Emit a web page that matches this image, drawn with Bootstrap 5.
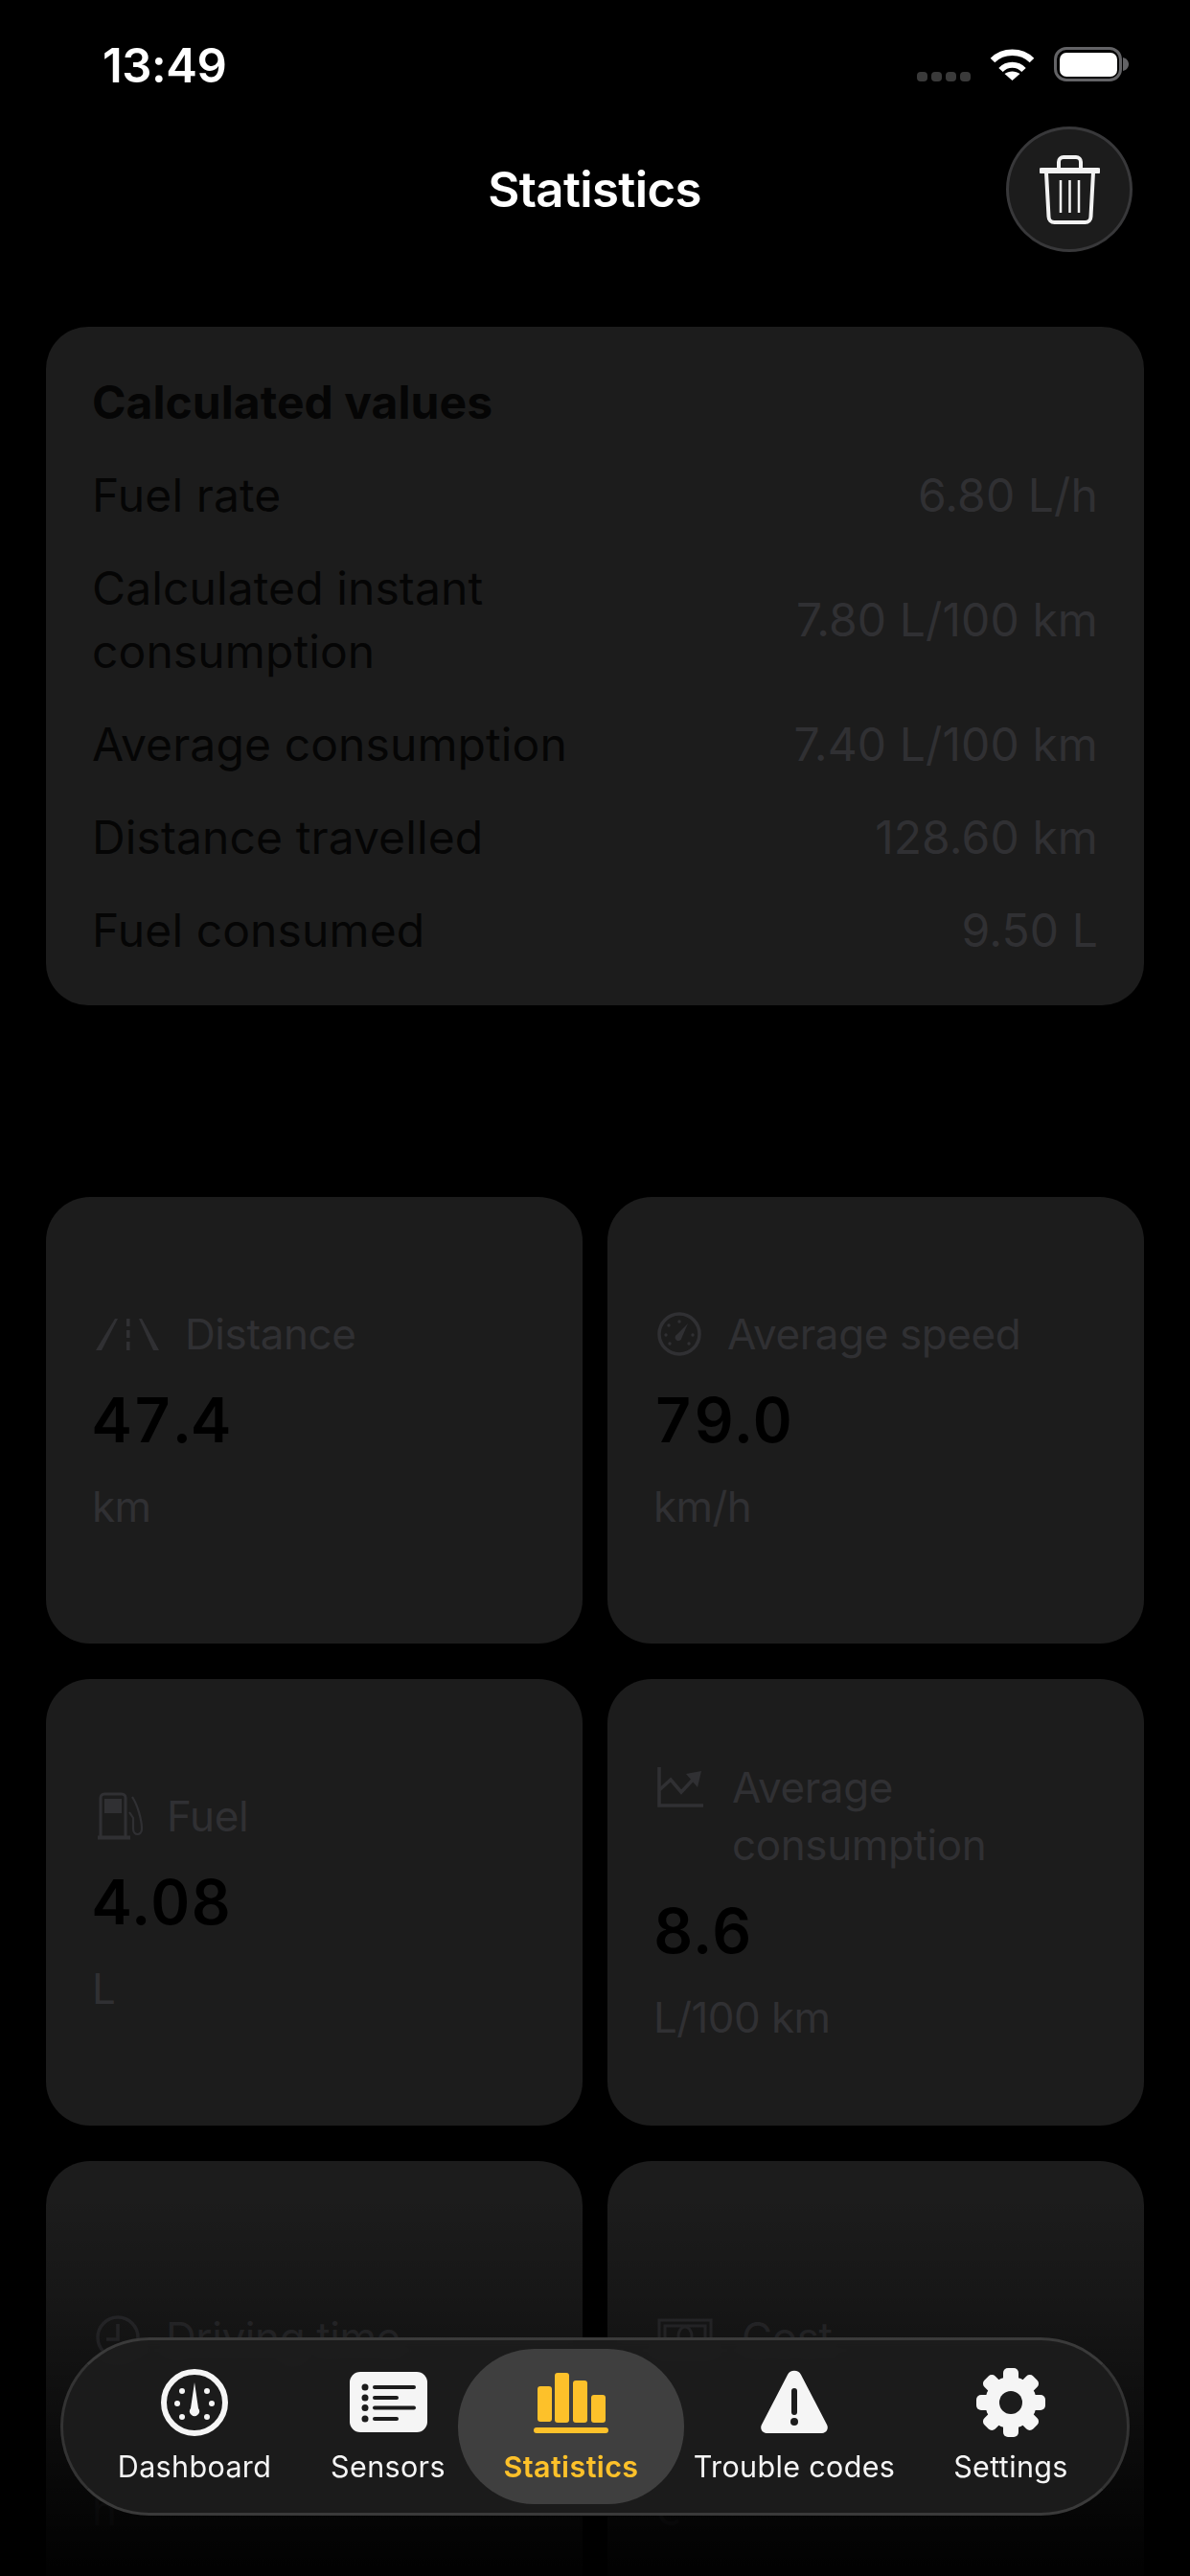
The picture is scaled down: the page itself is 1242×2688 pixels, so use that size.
<!DOCTYPE html>
<html lang="en">
<head>
<meta charset="utf-8">
<title>Statistics</title>
<link href="https://cdn.jsdelivr.net/npm/bootstrap@5.3.0/dist/css/bootstrap.min.css" rel="stylesheet">
<style>
html,body{background:#000;margin:0}
body{width:1242px;height:2688px;overflow:hidden;font-family:Inter,"Liberation Sans",sans-serif;position:relative;color:#fff}
.status-row{height:132px;padding:0 64px 0 107px}
.clock-text{font-size:49px;font-weight:600;line-height:1;margin-top:44px;letter-spacing:-.4px}
.status-icons{margin-top:49px;height:36px}
.sig-dots{gap:4px;align-self:flex-end;margin-right:20px}
.sig-dots i{display:block;width:11px;height:10px;border-radius:4px;background:#3a3a3a}
.wifi-mark{margin-right:20px}
.batt{width:71px;height:36px;border:3.500px solid #636366;border-radius:13px;padding:2.500px}
.batt i{display:block;height:100%;background:#fff;border-radius:7px}
.batt-nub{margin-left:1px}
.title-row{height:131px;grid-template-columns:131px 1fr 132px;padding:0 60px}
.page-title{font-size:51px;font-weight:600;line-height:1;letter-spacing:-.65px}
.round-btn{width:132px;height:131px;border-radius:50%;background:#1c1c1c;border:3px solid #38383a}
.calc-card{margin:78px 48px 200px 48px;padding:46px 48px 45px 48px;background:#1c1c1c;border-radius:44px;gap:31px;height:708px}
.calc-line{font-size:48px;line-height:66px;letter-spacing:.1px}
.calc-head{font-size:48px;line-height:66px;font-weight:700;color:#050505;letter-spacing:.05px}
.calc-name{color:#050505;width:62%}
.calc-val{color:#303033;white-space:nowrap}
.stat-grid{margin:0 48px;grid-template-columns:560px 560px;grid-template-rows:466px 466px 548px;column-gap:26px;row-gap:37px}
.stat-box{background:#1c1c1c;border-radius:46px;padding:0 30px 0 48px}
.stat-head{font-size:44px;line-height:60px;color:#303033;letter-spacing:-.4px}
.hg-a{gap:24px}.hg-b{gap:27px}.hg-c{gap:30px}
.stat-icon{height:60px;flex:none}
.stat-num{font-size:64px;font-weight:600;line-height:80px;color:#000;margin:20px 0;letter-spacing:1.2px;font-variant-numeric:tabular-nums}
.stat-unit{font-size:44px;line-height:60px;color:#303033;letter-spacing:-.6px}
.fade-veil{position:absolute;left:0;right:0;top:2290px;height:398px;background:linear-gradient(to bottom,rgba(0,0,0,0) 0,rgba(0,0,0,.2) 110px,rgba(0,0,0,.85) 350px,rgba(0,0,0,.95) 398px)}
.tabbar{position:absolute;left:63px;top:2439px;width:1116px;height:186px;border-radius:93px;background:rgba(28,28,28,.95);backdrop-filter:blur(6px);border:3px solid #3a3a3a;border-left-color:#333;border-right-color:#333;padding:9px 0}
.tab-item{height:162px;color:#f5f5f5;font-size:30.5px;line-height:40px;letter-spacing:.35px;padding-top:20px;white-space:nowrap;flex:none;gap:11px}
.tab-item svg{display:block;height:72px}
.tw1{width:274px}.tw2{width:130px;margin-right:8px}.tw3{width:236px}.tw4{width:230px}.tw5{width:222px}
.tab-on{background:#3f3f3f;border-radius:80px;color:#fdc12a;font-weight:600;letter-spacing:.4px}
</style>
</head>
<body>
<div class="status-row d-flex justify-content-between">
  <div class="clock-text">13:49</div>
  <div class="status-icons d-flex align-items-center">
    <div class="sig-dots d-flex"><i></i><i></i><i></i><i></i></div>
    <svg class="wifi-mark" width="47" height="36" viewBox="0 0 47 36"><path d="M3 14C14 3 33 3 44 14" fill="none" stroke="#fff" stroke-width="6.500"/><path d="M11.500 24C18 17 29 17 35.500 24" fill="none" stroke="#fff" stroke-width="6"/><path d="M23.500 35L15.500 28C20 24.500 27 24.500 31.500 28Z" fill="#fff"/></svg>
    <div class="batt"><i></i></div>
    <svg class="batt-nub" width="6" height="14" viewBox="0 0 6 14"><path d="M0 0C4 1 6 4 6 7S4 13 0 14Z" fill="#636366"/></svg>
  </div>
</div>
<div class="title-row d-grid align-items-center">
  <div></div>
  <div class="page-title text-center">Statistics</div>
  <div class="round-btn d-flex align-items-center justify-content-center">
    <svg width="63" height="72" viewBox="0 0 63 72" fill="none" stroke="#f2f2f2"><path d="M20 14V7a5 5 0 0 1 5-5h13a5 5 0 0 1 5 5v7" stroke-width="4"/><path d="M2 16H61" stroke-width="6" stroke-linecap="round"/><path d="M7 18l2.500 46a6 6 0 0 0 6 6H47.500a6 6 0 0 0 6-6L56 18" stroke-width="4"/><path d="M22 26V60M31.500 26V60M41 26V60" stroke-width="2.500"/></svg>
  </div>
</div>
<div class="calc-card d-flex flex-column">
  <div class="calc-head">Calculated values</div>
  <div class="calc-line d-flex justify-content-between align-items-center"><span class="calc-name">Fuel rate</span><span class="calc-val">6.80 L/h</span></div>
  <div class="calc-line d-flex justify-content-between align-items-center"><span class="calc-name">Calculated instant consumption</span><span class="calc-val">7.80 L/100 km</span></div>
  <div class="calc-line d-flex justify-content-between align-items-center"><span class="calc-name">Average consumption</span><span class="calc-val">7.40 L/100 km</span></div>
  <div class="calc-line d-flex justify-content-between align-items-center"><span class="calc-name">Distance travelled</span><span class="calc-val">128.60 km</span></div>
  <div class="calc-line d-flex justify-content-between align-items-center"><span class="calc-name">Fuel consumed</span><span class="calc-val">9.50 L</span></div>
</div>
<div class="stat-grid d-grid">
  <div class="stat-box d-flex flex-column justify-content-center">
    <div class="stat-head d-flex hg-b">
      <div class="stat-icon ms-1 d-flex align-items-center"><svg width="66" height="33" viewBox="0 0 66 33" fill="#303033"><path d="M20 0h3L6 33H0Z"/><path d="M45 0h3l18 33H60Z"/><rect x="32" y="0" width="3.500" height="8"/><rect x="32" y="12" width="3.500" height="8"/><rect x="32" y="24" width="3.500" height="9"/></svg></div>
      <div>Distance</div>
    </div>
    <div class="stat-num">47.4</div>
    <div class="stat-unit">km</div>
  </div>
  <div class="stat-box d-flex flex-column justify-content-center">
    <div class="stat-head d-flex hg-b">
      <div class="stat-icon ms-1 d-flex align-items-center"><svg width="46" height="46" viewBox="0 0 46 46" fill="#303033"><circle cx="23" cy="23" r="21" fill="none" stroke="#303033" stroke-width="3.500"/><path d="M32 12L25.500 27a3.500 3.500 0 1 1-5-3.500Z"/><circle cx="23" cy="10" r="1.700"/><circle cx="12" cy="14" r="1.700"/><circle cx="9" cy="24" r="1.700"/><circle cx="13" cy="33" r="1.700"/><circle cx="33" cy="33" r="1.700"/><circle cx="37" cy="24" r="1.700"/></svg></div>
      <div>Average speed</div>
    </div>
    <div class="stat-num">79.0</div>
    <div class="stat-unit">km/h</div>
  </div>
  <div class="stat-box d-flex flex-column justify-content-center">
    <div class="stat-head d-flex hg-a">
      <div class="stat-icon ms-1 d-flex align-items-center"><svg width="50" height="50" viewBox="0 0 50 50" fill="none" stroke="#303033" stroke-width="3"><path d="M5 47V6a4 4 0 0 1 4-4h18a4 4 0 0 1 4 4V47"/><path d="M2 47.500H36" stroke-width="4"/><rect x="9" y="7" width="18" height="15" fill="#303033" stroke="none"/><path d="M38 5C44 14 48 30 48 38c0 8-9 8-9 0V27l-4-6" stroke-width="2.200"/></svg></div>
      <div>Fuel</div>
    </div>
    <div class="stat-num">4.08</div>
    <div class="stat-unit">L</div>
  </div>
  <div class="stat-box d-flex flex-column justify-content-center">
    <div class="stat-head d-flex hg-c">
      <div class="stat-icon ms-1 d-flex align-items-center"><svg width="48" height="42" viewBox="0 0 48 42" fill="none" stroke="#303033" stroke-width="3.500"><path d="M2 0V40H48"/><path d="M2 24L14 13 25 26 39 11"/><path d="M30 7L46 4 42 21Z" fill="#303033" stroke="none"/></svg></div>
      <div>Average<br>consumption</div>
    </div>
    <div class="stat-num">8.6</div>
    <div class="stat-unit">L/100 km</div>
  </div>
  <div class="stat-box d-flex flex-column justify-content-center">
    <div class="stat-head d-flex hg-b">
      <div class="stat-icon ms-1 d-flex align-items-center"><svg width="46" height="46" viewBox="0 0 46 46" fill="none" stroke="#303033" stroke-width="3.500"><circle cx="23" cy="23" r="21"/><path d="M23 9V25H11"/></svg></div>
      <div>Driving time</div>
    </div>
    <div class="stat-num">0:36</div>
    <div class="stat-unit">h</div>
  </div>
  <div class="stat-box d-flex flex-column justify-content-center">
    <div class="stat-head d-flex hg-c">
      <div class="stat-icon ms-1 d-flex align-items-center"><svg width="58" height="40" viewBox="0 0 58 40" fill="none" stroke="#303033" stroke-width="3"><rect x="2" y="2" width="54" height="34"/><rect x="8" y="8" width="42" height="22"/><ellipse cx="29" cy="19" rx="7" ry="10"/></svg></div>
      <div>Cost</div>
    </div>
    <div class="stat-num">6.12</div>
    <div class="stat-unit">€</div>
  </div>
</div>
<div class="fade-veil"></div>
<nav class="tabbar d-flex">
  <div class="tab-item tw1 d-flex flex-column align-items-center">
    <svg width="70" height="72" viewBox="0 0 70 72"><circle cx="35" cy="36" r="32" fill="none" stroke="#f5f5f5" stroke-width="6"/><path d="M35 15l4 27a5 5 0 1 1-8 0Z" fill="#f5f5f5"/><g fill="#f5f5f5"><circle cx="17" cy="37" r="3"/><circle cx="53" cy="37" r="3"/><circle cx="22" cy="24" r="3"/><circle cx="48" cy="24" r="3"/><circle cx="22" cy="51" r="3"/><circle cx="48" cy="51" r="3"/></g></svg>
    <span>Dashboard</span>
  </div>
  <div class="tab-item tw2 d-flex flex-column align-items-center">
    <svg width="81" height="72" viewBox="0 0 81 72"><rect x="0" y="4" width="81" height="63" rx="11" fill="#f5f5f5"/><g fill="#1c1c1c"><circle cx="16" cy="20" r="3.500"/><circle cx="16" cy="31" r="3.500"/><circle cx="16" cy="41.500" r="3.500"/><circle cx="16" cy="53" r="3.500"/><rect x="24" y="18" width="45" height="4" rx="2"/><rect x="24" y="29" width="27" height="4" rx="2"/><rect x="24" y="39.500" width="45" height="4" rx="2"/><rect x="24" y="51" width="27" height="4" rx="2"/></g></svg>
    <span>Sensors</span>
  </div>
  <div class="tab-item tw3 tab-on d-flex flex-column align-items-center">
    <svg width="78" height="72" viewBox="0 0 78 72" fill="#fdc12a"><rect x="4" y="19" width="15" height="37" rx="3"/><rect x="22" y="5" width="15" height="52" rx="3"/><rect x="41" y="13" width="15" height="44" rx="3"/><rect x="60" y="28" width="15" height="29" rx="3"/><rect x="0" y="62" width="78" height="6" rx="3"/></svg>
    <span>Statistics</span>
  </div>
  <div class="tab-item tw4 d-flex flex-column align-items-center">
    <svg width="72" height="72" viewBox="0 0 72 72"><path d="M29 7a8 8 0 0 1 14 0L70 59a6 6 0 0 1-5 9H7a6 6 0 0 1-5-9Z" fill="#f5f5f5"/><rect x="33" y="21" width="6" height="28" rx="3" fill="#1c1c1c"/><circle cx="36" cy="56" r="4" fill="#1c1c1c"/></svg>
    <span>Trouble codes</span>
  </div>
  <div class="tab-item tw5 d-flex flex-column align-items-center">
    <svg width="72" height="72" viewBox="-36 -36 72 72"><g fill="#f5f5f5"><circle r="27"/><rect x="-8" y="-36" width="16" height="16" rx="5"/><rect x="-8" y="-36" width="16" height="16" rx="5" transform="rotate(45)"/><rect x="-8" y="-36" width="16" height="16" rx="5" transform="rotate(90)"/><rect x="-8" y="-36" width="16" height="16" rx="5" transform="rotate(135)"/><rect x="-8" y="-36" width="16" height="16" rx="5" transform="rotate(180)"/><rect x="-8" y="-36" width="16" height="16" rx="5" transform="rotate(225)"/><rect x="-8" y="-36" width="16" height="16" rx="5" transform="rotate(270)"/><rect x="-8" y="-36" width="16" height="16" rx="5" transform="rotate(315)"/></g><circle r="12" fill="#1c1c1c"/></svg>
    <span>Settings</span>
  </div>
</nav>
<script src="https://cdn.jsdelivr.net/npm/bootstrap@5.3.0/dist/js/bootstrap.bundle.min.js"></script>
</body>
</html>
